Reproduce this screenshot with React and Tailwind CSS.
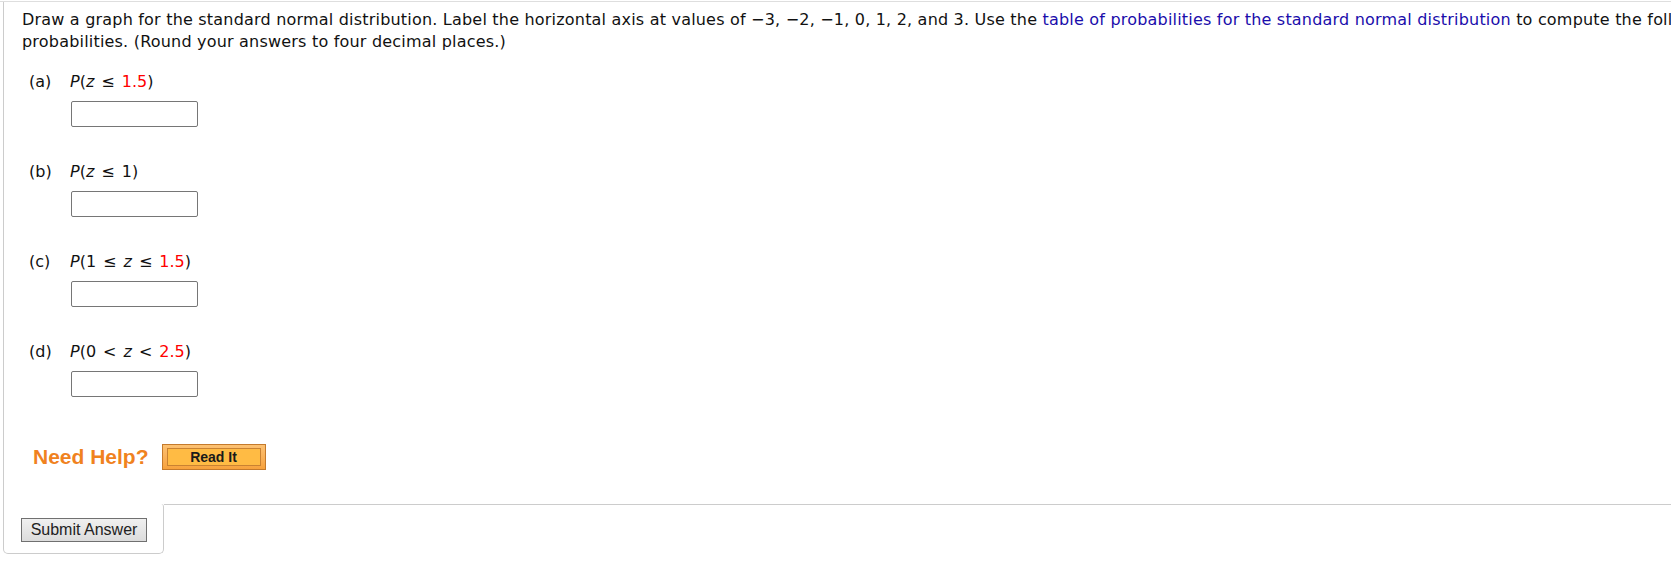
import React from "react";

const font = { fontFamily: "Verdana, 'DejaVu Sans', sans-serif" };

function Item({ label, children }) {
  return (
    <div className="h-[90px]">
      <div className="flex h-[22px] items-center leading-[22px]">
        <span className="w-[48px] pl-[7px]">({label})</span>
        <span>{children}</span>
      </div>
      <div className="mt-[8px] pl-[49px]">
        <input
          type="text"
          className="block h-[26px] w-[127px] rounded-[2px] border border-[#767676] bg-white outline-none"
        />
      </div>
    </div>
  );
}

const P = () => <span className="italic">P</span>;
const Z = () => <span className="italic">z</span>;
const R = ({ children }) => <span className="text-[#ff0000]">{children}</span>;
const Op = ({ children }) => <span className="mx-[7px]">{children}</span>;

export default function App() {
  return (
    <div className="h-[561px] w-[1671px] overflow-hidden bg-white text-[16px] text-[#111]" style={font}>
      <div className="mt-px h-px w-full bg-[#dedede]" />
      <div className="ml-[3px] w-[2000px]">
        <div className="h-[502px] border-l border-[#cccccc] pl-[18px] pt-[7px]">
          <p className="leading-[22px] tracking-[0.2px]">
            Draw a graph for the standard normal distribution. Label the horizontal axis at values of −3, −2, −1, 0, 1, 2, and 3. Use the{" "}
            <span className="text-[#1a0dab]">table of probabilities for the standard normal distribution</span> to compute the following
            <br />
            probabilities. (Round your answers to four decimal places.)
          </p>
          <div className="mt-[18px]">
            <Item label="a">
              <P />(<Z /><Op>≤</Op><R>1.5</R>)
            </Item>
            <Item label="b">
              <P />(<Z /><Op>≤</Op>1)
            </Item>
            <Item label="c">
              <P />(1<Op>≤</Op><Z /><Op>≤</Op><R>1.5</R>)
            </Item>
            <Item label="d">
              <P />(0<Op>&lt;</Op><Z /><Op>&lt;</Op><R>2.5</R>)
            </Item>
          </div>
          <div className="mt-[13px] flex h-[26px] items-center pl-[11px]" style={{ fontFamily: "Arial, 'Liberation Sans', sans-serif" }}>
            <span className="text-[21px] font-bold text-[#f0821e]">Need Help?</span>
            <button className="ml-[13px] h-[26px] w-[104px] border border-[#c47a2c] bg-gradient-to-b from-[#fcc172] to-[#f7a23c] p-[3px] px-[4px]">
              <span className="flex h-full w-full items-center justify-center border border-[#c98232] bg-[#ffbb44] text-[14px] font-bold text-[#1a1a1a]">
                Read It
              </span>
            </button>
          </div>
        </div>
        <div className="flex">
          <div className="h-[50px] w-[161px] rounded-b-[5px] rounded-tr-[3px] border-x border-b border-[#cccccc] pl-[17px] pt-[14px]">
            <button
              className="h-[24px] w-[126px] border border-[#707070] bg-gradient-to-b from-[#f0f0f0] to-[#dcdcdc] text-[16px] leading-none text-[#222]"
              style={{ fontFamily: "Arial, 'Liberation Sans', sans-serif" }}
            >
              Submit Answer
            </button>
          </div>
          <div className="flex-1 border-t border-[#cccccc]" />
        </div>
      </div>
    </div>
  );
}
